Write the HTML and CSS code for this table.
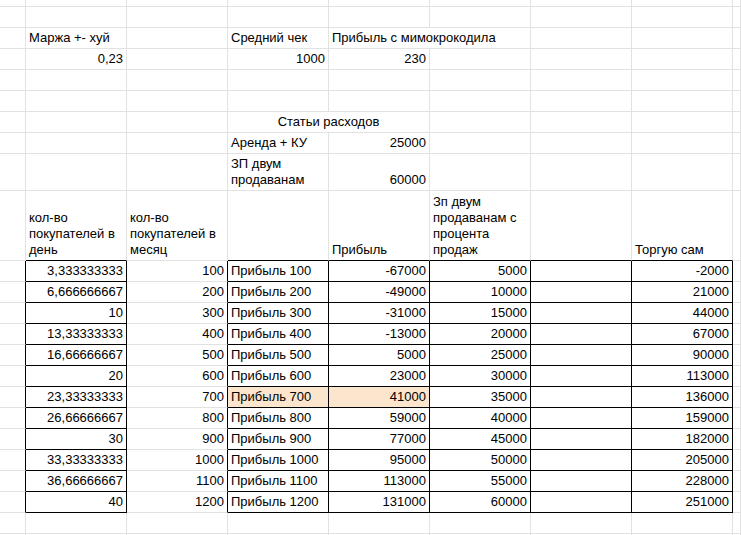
FILE: index.html
```html
<!DOCTYPE html>
<html lang="ru">
<head>
<meta charset="utf-8">
<title>Таблица</title>
<link rel="stylesheet" href="styles.css">
</head>
<body>
<div class="sheet">
  <!-- row 0 (partial) -->
  <div class="c"></div><div class="c"></div><div class="c"></div><div class="c"></div><div class="c"></div><div class="c"></div><div class="c"></div><div class="c"></div><div class="c"></div>
  <!-- row 1 -->
  <div class="c"></div><div class="c"></div><div class="c"></div><div class="c"></div><div class="c"></div><div class="c"></div><div class="c"></div><div class="c"></div><div class="c"></div>
  <!-- row 2 -->
  <div class="c"></div><div class="c">Маржа +- хуй</div><div class="c"></div><div class="c">Средний чек</div><div class="c s2">Прибыль с мимокрокодила</div><div class="c"></div><div class="c"></div><div class="c"></div>
  <!-- row 3 -->
  <div class="c"></div><div class="c r">0,23</div><div class="c"></div><div class="c r">1000</div><div class="c r">230</div><div class="c"></div><div class="c"></div><div class="c"></div><div class="c"></div>
  <!-- row 4 -->
  <div class="c"></div><div class="c"></div><div class="c"></div><div class="c"></div><div class="c"></div><div class="c"></div><div class="c"></div><div class="c"></div><div class="c"></div>
  <!-- row 5 -->
  <div class="c"></div><div class="c"></div><div class="c"></div><div class="c"></div><div class="c"></div><div class="c"></div><div class="c"></div><div class="c"></div><div class="c"></div>
  <!-- row 6 -->
  <div class="c"></div><div class="c"></div><div class="c"></div><div class="c s2 ctr">Статьи расходов</div><div class="c"></div><div class="c"></div><div class="c"></div><div class="c"></div>
  <!-- row 7 -->
  <div class="c"></div><div class="c"></div><div class="c"></div><div class="c">Аренда + КУ</div><div class="c r">25000</div><div class="c"></div><div class="c"></div><div class="c"></div><div class="c"></div>
  <!-- row 8 -->
  <div class="c"></div><div class="c"></div><div class="c"></div><div class="c w">ЗП двум продаванам</div><div class="c r">60000</div><div class="c"></div><div class="c"></div><div class="c"></div><div class="c"></div>
  <!-- row 9 header -->
  <div class="c br0"></div><div class="c w bb">кол-во<br>покупателей в день</div><div class="c w">кол-во<br>покупателей в месяц</div><div class="c bb"></div><div class="c bb">Прибыль</div><div class="c w bb">Зп двум продаванам с процента продаж</div><div class="c bb"></div><div class="c bb">Торгую сам</div><div class="c"></div>
  <!-- data -->
  <div class="c br"></div><div class="c r br bb">3,333333333</div><div class="c r br">100</div><div class="c br bb">Прибыль 100</div><div class="c r br bb">-67000</div><div class="c r br bb">5000</div><div class="c br bb"></div><div class="c r br bb">-2000</div><div class="c"></div>
  <div class="c br"></div><div class="c r br bb">6,666666667</div><div class="c r br">200</div><div class="c br bb">Прибыль 200</div><div class="c r br bb">-49000</div><div class="c r br bb">10000</div><div class="c br bb"></div><div class="c r br bb">21000</div><div class="c"></div>
  <div class="c br"></div><div class="c r br bb">10</div><div class="c r br">300</div><div class="c br bb">Прибыль 300</div><div class="c r br bb">-31000</div><div class="c r br bb">15000</div><div class="c br bb"></div><div class="c r br bb">44000</div><div class="c"></div>
  <div class="c br"></div><div class="c r br bb">13,33333333</div><div class="c r br">400</div><div class="c br bb">Прибыль 400</div><div class="c r br bb">-13000</div><div class="c r br bb">20000</div><div class="c br bb"></div><div class="c r br bb">67000</div><div class="c"></div>
  <div class="c br"></div><div class="c r br bb">16,66666667</div><div class="c r br">500</div><div class="c br bb">Прибыль 500</div><div class="c r br bb">5000</div><div class="c r br bb">25000</div><div class="c br bb"></div><div class="c r br bb">90000</div><div class="c"></div>
  <div class="c br"></div><div class="c r br bb">20</div><div class="c r br">600</div><div class="c br bb">Прибыль 600</div><div class="c r br bb">23000</div><div class="c r br bb">30000</div><div class="c br bb"></div><div class="c r br bb">113000</div><div class="c"></div>
  <div class="c br"></div><div class="c r br bb">23,33333333</div><div class="c r br">700</div><div class="c br bb hl">Прибыль 700</div><div class="c r br bb hl">41000</div><div class="c r br bb">35000</div><div class="c br bb"></div><div class="c r br bb">136000</div><div class="c"></div>
  <div class="c br"></div><div class="c r br bb">26,66666667</div><div class="c r br">800</div><div class="c br bb">Прибыль 800</div><div class="c r br bb">59000</div><div class="c r br bb">40000</div><div class="c br bb"></div><div class="c r br bb">159000</div><div class="c"></div>
  <div class="c br"></div><div class="c r br bb">30</div><div class="c r br">900</div><div class="c br bb">Прибыль 900</div><div class="c r br bb">77000</div><div class="c r br bb">45000</div><div class="c br bb"></div><div class="c r br bb">182000</div><div class="c"></div>
  <div class="c br"></div><div class="c r br bb">33,33333333</div><div class="c r br">1000</div><div class="c br bb">Прибыль 1000</div><div class="c r br bb">95000</div><div class="c r br bb">50000</div><div class="c br bb"></div><div class="c r br bb">205000</div><div class="c"></div>
  <div class="c br"></div><div class="c r br bb">36,66666667</div><div class="c r br">1100</div><div class="c br bb">Прибыль 1100</div><div class="c r br bb">113000</div><div class="c r br bb">55000</div><div class="c br bb"></div><div class="c r br bb">228000</div><div class="c"></div>
  <div class="c br"></div><div class="c r br bb">40</div><div class="c r br">1200</div><div class="c br bb">Прибыль 1200</div><div class="c r br bb">131000</div><div class="c r br bb">60000</div><div class="c br bb"></div><div class="c r br bb">251000</div><div class="c"></div>
  <!-- empty row -->
  <div class="c"></div><div class="c"></div><div class="c"></div><div class="c"></div><div class="c"></div><div class="c"></div><div class="c"></div><div class="c"></div><div class="c"></div>
  <!-- trailing partial row -->
  <div class="c"></div><div class="c"></div><div class="c"></div><div class="c"></div><div class="c"></div><div class="c"></div><div class="c"></div><div class="c"></div><div class="c"></div>
</div>
</body>
</html>
```

FILE: styles.css
```css
html, body {
  margin: 0;
  padding: 0;
  background: #ffffff;
  overflow: hidden;
}

.sheet {
  display: grid;
  grid-template-columns: 26px repeat(7, 101px) 1fr;
  grid-template-rows: 7px repeat(7, 21px) 37px 70px repeat(13, 21px) 1fr;
  width: 741px;
  height: 535px;
  font-family: "Liberation Sans", Arial, sans-serif;
  font-size: 13px;
  line-height: 16px;
  color: #000000;
}

.c {
  box-sizing: border-box;
  border-right: 1px solid #e2e2e2;
  border-bottom: 1px solid #e2e2e2;
  display: flex;
  align-items: flex-end;
  justify-content: flex-start;
  padding: 0 3px 2px 3px;
  white-space: nowrap;
  overflow: visible;
  min-width: 0;
}

.r {
  justify-content: flex-end;
}

.ctr {
  justify-content: center;
}

.s2 {
  grid-column: span 2;
}

.w {
  white-space: normal;
  display: block;
  align-self: stretch;
  display: flex;
  flex-direction: column;
  justify-content: flex-end;
  align-items: flex-start;
}

.br {
  border-right-color: #000000;
}

.bb {
  border-bottom-color: #000000;
}

.hl {
  background: #fce5cd;
}
```
